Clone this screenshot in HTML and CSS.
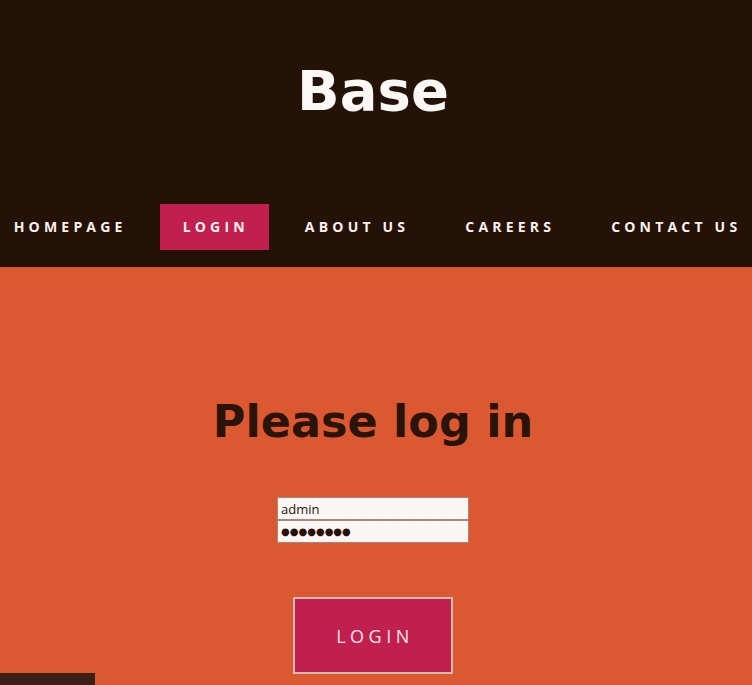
FILE: index.html
```html
<!DOCTYPE html>
<html>
<head>
<meta charset="utf-8">
<link rel="stylesheet" href="styles.css">
</head>
<body>
<header class="site-header">
  <h1 class="site-title">Base</h1>
  <nav class="main-nav">
    <a class="nav-item" href="#">Homepage</a>
    <a class="nav-item active" href="#">Login</a>
    <a class="nav-item" href="#">About us</a>
    <a class="nav-item" href="#">Careers</a>
    <a class="nav-item" href="#">Contact us</a>
  </nav>
</header>
<main class="content">
  <h2 class="page-title">Please log in</h2>
  <form class="login-form">
    <div class="fields">
      <input class="field" type="text" value="admin">
      <input class="field field-secret" type="text" value="●●●●●●●●" aria-label="Password">
    </div>
    <button class="login-btn" type="button">LOGIN</button>
  </form>
</main>
<div class="corner-bar"></div>
</body>
</html>
```

FILE: styles.css
```css
html, body {
  margin: 0;
  padding: 0;
  height: 100%;
  overflow: hidden;
}
body {
  background: #dc5830;
  font-family: "DejaVu Sans", sans-serif;
}
.site-header {
  background: #251206;
  height: 267px;
  display: flex;
  flex-direction: column;
  align-items: center;
}
.site-title {
  align-self: stretch;
  text-align: center;
  margin: 0;
  padding: 56px 6px 0 0;
  height: 204px;
  box-sizing: border-box;
  font-size: 56px;
  line-height: 70px;
  color: #fbf7f4;
  font-weight: bold;
}
.main-nav {
  width: 100%;
  display: flex;
  justify-content: center;
  gap: 13px;
}
.nav-item {
  flex: none;
  display: block;
  height: 46px;
  line-height: 46px;
  padding: 0 20px 0 23px;
  color: #fbf1ee;
  text-decoration: none;
  text-transform: uppercase;
  font-family: "Open Sans", sans-serif;
  font-weight: bold;
  font-size: 14px;
  letter-spacing: 4.2px;
}
.nav-item.active {
  background: #c11f4e;
}
.content {
  display: flex;
  flex-direction: column;
  align-items: center;
  padding-right: 6px;
}
.page-title {
  margin: 128px 0 0;
  font-size: 44.5px;
  line-height: 54px;
  color: #2a1309;
  font-weight: bold;
}
.login-form {
  display: flex;
  flex-direction: column;
  align-items: center;
}
.fields {
  margin-top: 48px;
  display: flex;
  flex-direction: column;
}
.field {
  width: 192px;
  height: 23px;
  box-sizing: border-box;
  margin: 0;
  padding: 0 3px;
  border: 1px solid #a8867c;
  background: #faf6f4;
  color: #2a1309;
  font-family: "Open Sans", sans-serif;
  font-size: 13px;
  outline: none;
}
.field-secret {
  font-family: "DejaVu Sans", sans-serif;
  font-size: 10px;
  color: #2a0f05;
}
.login-btn {
  margin-top: 54px;
  width: 160px;
  height: 77px;
  background: #c11f4e;
  border: 2px solid #cbbcb4;
  color: #f4e8ea;
  font-family: "Open Sans", sans-serif;
  font-size: 18px;
  letter-spacing: 4.5px;
  padding: 0 0 0 4px;
}
.corner-bar {
  position: fixed;
  left: 0;
  bottom: 0;
  width: 95px;
  height: 12px;
  background: #3a2018;
}
```
